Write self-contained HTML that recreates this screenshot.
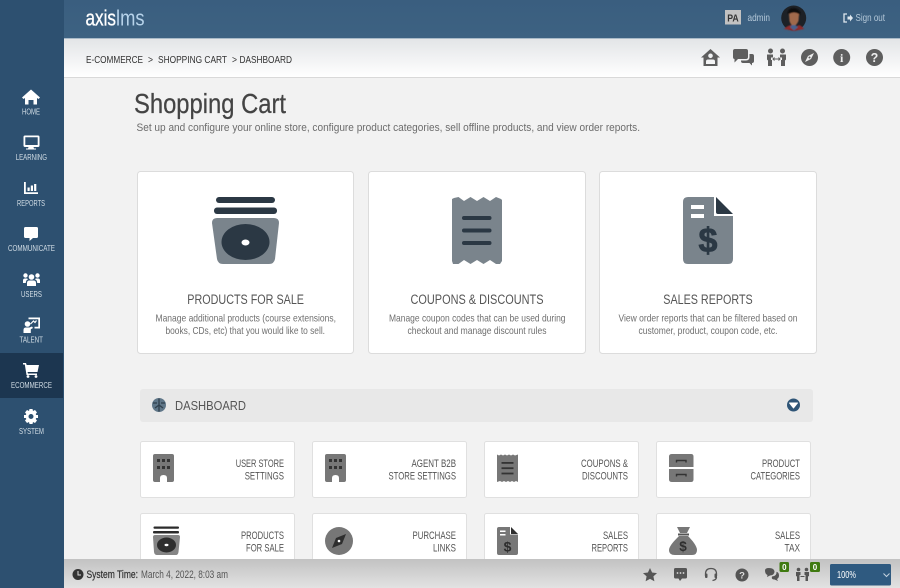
<!DOCTYPE html>
<html lang="en"><head><meta charset="utf-8"><title>Shopping Cart</title>
<style>
html,body{margin:0;padding:0;width:900px;height:588px;overflow:hidden;background:#f2f2f2}
svg{display:block}
text{font-family:"Liberation Sans",sans-serif}
</style></head><body>
<svg xmlns="http://www.w3.org/2000/svg" width="900" height="588" viewBox="0 0 900 588">
<defs>
<linearGradient id="sub" x1="0" y1="0" x2="0" y2="1"><stop offset="0" stop-color="#e3e5e7"/><stop offset="1" stop-color="#fff"/></linearGradient>
<linearGradient id="foot" x1="0" y1="0" x2="0" y2="1"><stop offset="0" stop-color="#c2c2c2"/><stop offset="1" stop-color="#e2e2e2"/></linearGradient>
<linearGradient id="head" x1="0" y1="0" x2="0" y2="1"><stop offset="0" stop-color="#3a5e7f"/><stop offset="1" stop-color="#3d6282"/></linearGradient>
<filter id="b" x="-10%" y="-10%" width="120%" height="120%"><feGaussianBlur stdDeviation="0.5"/></filter>
</defs>
<rect width="900" height="588" fill="#f2f2f2"/>

<!-- content: hero cards -->
<g fill="#fff" stroke="#dcdcdc">
<rect x="137.500" y="171.500" width="216" height="182" rx="3"/>
<rect x="368.500" y="171.500" width="217" height="182" rx="3"/>
<rect x="599.500" y="171.500" width="217" height="182" rx="3"/>
</g>
<!-- products icon -->
<rect x="216" y="197" width="59" height="6" rx="3" fill="#2b3844"/>
<rect x="214" y="207.500" width="63" height="6.500" rx="3" fill="#2b3844"/>
<path d="M217 218H274Q279 218 279 223L275 259Q274 264 269 264H223Q218 264 217 259L212 223Q212 218 217 218Z" fill="#7a848c"/>
<ellipse cx="245.500" cy="242" rx="24" ry="18" fill="#2b3844"/>
<ellipse cx="245.500" cy="242.500" rx="4" ry="3" fill="#fff"/>
<!-- receipt icon -->
<path d="M452 199L454 198L458.500 197L464 201L470.500 197L477 201L483.500 197L490 201L496 197L501 199L502 200V261L500 264L496 264L490 260L483.500 264L477 260L470.500 264L464 260L458.500 264L453 264L452 261Z" fill="#7a848c"/>
<g fill="#2b3844"><rect x="462" y="216" width="29.500" height="4" rx="2"/><rect x="462" y="228.500" width="29.500" height="4" rx="2"/><rect x="462" y="241" width="29.500" height="4" rx="2"/></g>
<!-- report icon -->
<path d="M688 197H714V216H733V259Q733 264 728 264H688Q683 264 683 259V202Q683 197 688 197Z" fill="#7a848c"/>
<path d="M716 197L733 214H718Q716 214 716 212Z" fill="#2b3844"/>
<rect x="691" y="205" width="13" height="4" fill="#fff"/><rect x="691" y="214" width="13" height="4" fill="#fff"/>
<text x="708" y="252" font-size="34" font-weight="700" fill="#2b3844" stroke="#2b3844" stroke-width=".8" text-anchor="middle">$</text>

<g fill="#555" font-size="13.500">
<text x="187.300" y="304" textLength="116.700" lengthAdjust="spacingAndGlyphs">PRODUCTS FOR SALE</text>
<text x="410.500" y="304" textLength="133" lengthAdjust="spacingAndGlyphs">COUPONS &amp; DISCOUNTS</text>
<text x="663.300" y="304" textLength="89.400" lengthAdjust="spacingAndGlyphs">SALES REPORTS</text>
</g>
<g fill="#6f6f6f" font-size="10.500">
<text x="155.500" y="321.500" textLength="180.500" lengthAdjust="spacingAndGlyphs">Manage additional products (course extensions,</text>
<text x="165.500" y="334" textLength="159.500" lengthAdjust="spacingAndGlyphs">books, CDs, etc) that you would like to sell.</text>
<text x="389" y="321.500" textLength="176.500" lengthAdjust="spacingAndGlyphs">Manage coupon codes that can be used during</text>
<text x="407.500" y="334" textLength="139" lengthAdjust="spacingAndGlyphs">checkout and manage discount rules</text>
<text x="618.500" y="321.500" textLength="179" lengthAdjust="spacingAndGlyphs">View order reports that can be filtered based on</text>
<text x="638.500" y="334" textLength="139" lengthAdjust="spacingAndGlyphs">customer, product, coupon code, etc.</text>
</g>

<!-- dashboard bar -->
<rect x="140" y="389" width="673" height="33" rx="3" fill="#e8e8e8"/>
<circle cx="159" cy="405" r="7" fill="#5f7688"/>
<path d="M159 398.500V411.500M153 403H157M161 403H165M155 408L159 405L163 408" stroke="#2f3f4c" stroke-width="1.300" fill="none"/>
<text x="175" y="410" font-size="13" fill="#555" textLength="71" lengthAdjust="spacingAndGlyphs">DASHBOARD</text>
<circle cx="793.500" cy="405" r="6.500" fill="#2f5577"/>
<path d="M789.500 403H797.500L793.500 408Z" fill="#fff" stroke="#fff" stroke-linejoin="round"/>

<!-- small cards -->
<g fill="#fff" stroke="#e0e0e0">
<rect x="140.500" y="441.500" width="154" height="56" rx="2"/>
<rect x="312.500" y="441.500" width="154" height="56" rx="2"/>
<rect x="484.500" y="441.500" width="154" height="56" rx="2"/>
<rect x="656.500" y="441.500" width="154" height="56" rx="2"/>
<rect x="140.500" y="513.500" width="154" height="60" rx="2"/>
<rect x="312.500" y="513.500" width="154" height="60" rx="2"/>
<rect x="484.500" y="513.500" width="154" height="60" rx="2"/>
<rect x="656.500" y="513.500" width="154" height="60" rx="2"/>
</g>
<g fill="#555" font-size="11.200">
<text x="235.700" y="467" textLength="48.300" lengthAdjust="spacingAndGlyphs">USER STORE</text>
<text x="244.700" y="479.500" textLength="39.300" lengthAdjust="spacingAndGlyphs">SETTINGS</text>
<text x="411.500" y="467" textLength="44.500" lengthAdjust="spacingAndGlyphs">AGENT B2B</text>
<text x="388.500" y="479.500" textLength="67.500" lengthAdjust="spacingAndGlyphs">STORE SETTINGS</text>
<text x="581" y="467" textLength="47" lengthAdjust="spacingAndGlyphs">COUPONS &amp;</text>
<text x="582" y="479.500" textLength="46" lengthAdjust="spacingAndGlyphs">DISCOUNTS</text>
<text x="762" y="467" textLength="38" lengthAdjust="spacingAndGlyphs">PRODUCT</text>
<text x="750.500" y="479.500" textLength="49.500" lengthAdjust="spacingAndGlyphs">CATEGORIES</text>
<text x="241" y="539" textLength="43" lengthAdjust="spacingAndGlyphs">PRODUCTS</text>
<text x="246" y="551.500" textLength="38" lengthAdjust="spacingAndGlyphs">FOR SALE</text>
<text x="412.500" y="539" textLength="43.500" lengthAdjust="spacingAndGlyphs">PURCHASE</text>
<text x="433" y="551.500" textLength="23" lengthAdjust="spacingAndGlyphs">LINKS</text>
<text x="603" y="539" textLength="25" lengthAdjust="spacingAndGlyphs">SALES</text>
<text x="591.500" y="551.500" textLength="36.500" lengthAdjust="spacingAndGlyphs">REPORTS</text>
<text x="775" y="539" textLength="25" lengthAdjust="spacingAndGlyphs">SALES</text>
<text x="784.500" y="551.500" textLength="15.500" lengthAdjust="spacingAndGlyphs">TAX</text>
</g>

<!-- small icons -->
<g>
<path d="M155 454H172Q174 454 174 456V480Q174 482 172 482H167V478Q167 475 163.500 475T160 478V482H155Q153 482 153 480V456Q153 454 155 454Z" fill="#777"/>
<g fill="#333"><rect x="157" y="459" width="3" height="3"/><rect x="162" y="459" width="3" height="3"/><rect x="167" y="459" width="3" height="3"/><rect x="157" y="466" width="3" height="3"/><rect x="162" y="466" width="3" height="3"/><rect x="167" y="466" width="3" height="3"/></g>
</g>
<g transform="translate(172 0)">
<path d="M155 454H172Q174 454 174 456V480Q174 482 172 482H167V478Q167 475 163.500 475T160 478V482H155Q153 482 153 480V456Q153 454 155 454Z" fill="#777"/>
<g fill="#333"><rect x="157" y="459" width="3" height="3"/><rect x="162" y="459" width="3" height="3"/><rect x="167" y="459" width="3" height="3"/><rect x="157" y="466" width="3" height="3"/><rect x="162" y="466" width="3" height="3"/><rect x="167" y="466" width="3" height="3"/></g>
</g>
<!-- small receipt -->
<path d="M497 454.500L499 455.500L501 454.500L503 455.500L505 454.500L507 455.500L509 454.500L511 455.500L513 454.500L515 455.500L518 454.500V482L516 481L514 482L512 481L510 482L508 481L506 482L504 481L502 482L500 481L497 482Z" fill="#777"/>
<g fill="#333"><rect x="501.500" y="462" width="12" height="1.800"/><rect x="501.500" y="467.300" width="12" height="1.800"/><rect x="501.500" y="472.600" width="12" height="1.800"/></g>
<!-- drawers -->
<path d="M672 454H691Q693.500 454 693.500 456.500V467H669V456.500Q669 454 672 454ZM669 469H693.500V479.500Q693.500 482 691 482H672Q669 482 669 479.500Z" fill="#777"/>
<path d="M676.500 462.500V460.500H686V462.500M676.500 476.500V474.500H686V476.500" stroke="#333" stroke-width="1.400" fill="none"/>
<!-- small product -->
<rect x="153.500" y="526.500" width="25.500" height="2.200" rx="1" fill="#2b2b2b"/>
<rect x="153" y="531" width="26" height="2.500" rx="1" fill="#2b2b2b"/>
<path d="M155 535H178Q180 535 180 537L178.500 552Q178 555 176 555H157Q154.500 555 154 552L153 537Q153 535 155 535Z" fill="#858585"/>
<ellipse cx="166.500" cy="545" rx="9.500" ry="7.500" fill="#2e2e2e"/><ellipse cx="166.500" cy="545" rx="2" ry="1.200" fill="#fff"/>
<!-- compass -->
<circle cx="339" cy="541" r="14" fill="#777"/>
<path d="M346 534L342 544L332 548L336 538Z" fill="#2e2e2e"/><circle cx="339" cy="541" r="1.300" fill="#fff"/>
<!-- small doc -->
<path d="M499 527H510V534.500H518V553Q518 555 516 555H499Q497 555 497 553V529Q497 527 499 527Z" fill="#777"/>
<path d="M511 527L518 534H511Z" fill="#2e2e2e"/>
<rect x="500" y="530.500" width="5.500" height="1.500" fill="#fff"/><rect x="500" y="534" width="5.500" height="1.500" fill="#fff"/>
<text x="507.500" y="551.500" font-size="14" font-weight="700" fill="#2e2e2e" text-anchor="middle">$</text>
<!-- money bag -->
<path d="M677 527H690L687 533H680Z" fill="#777"/><rect x="678" y="533.500" width="11" height="2" fill="#555"/>
<path d="M679 536H688C692 540 697 546 697 550Q697 555 692 555H675Q669 555 669 550C669 546 675 540 679 536Z" fill="#777"/>
<text x="683" y="551" font-size="13.500" font-weight="700" fill="#2e2e2e" text-anchor="middle">$</text>

<!-- title -->
<text x="134" y="113" font-size="28" fill="#444" stroke="#444" stroke-width=".25" textLength="152" lengthAdjust="spacingAndGlyphs">Shopping Cart</text>
<text x="136.500" y="131" font-size="11.200" fill="#6c6c6c" textLength="503.500" lengthAdjust="spacingAndGlyphs">Set up and configure your online store, configure product categories, sell offline products, and view order reports.</text>

<!-- top header -->
<rect x="64" y="0" width="836" height="38" fill="url(#head)"/>
<rect x="64" y="38" width="836" height="1" fill="#a9bac8"/>
<text x="85.500" y="25.500" font-size="22" fill="#fff" stroke="#fff" stroke-width=".3" textLength="30.500" lengthAdjust="spacingAndGlyphs">axis</text>
<text x="116" y="25.500" font-size="22" fill="#b7d3ea" textLength="28.500" lengthAdjust="spacingAndGlyphs">lms</text>
<rect x="725" y="10" width="16" height="14.500" fill="#c2c2c2"/>
<text x="733" y="21.300" font-size="10" font-weight="700" fill="#333" text-anchor="middle" textLength="11.500" lengthAdjust="spacingAndGlyphs">PA</text>
<text x="747.500" y="21" font-size="10.500" fill="#b4c8d8" textLength="22.500" lengthAdjust="spacingAndGlyphs">admin</text>
<circle cx="793.700" cy="18" r="12.500" fill="#1d2126"/>
<g filter="url(#b)">
<path d="M787.500 14Q788 8 794 8Q800 9 800.500 14L799 16L790 13Z" fill="#0c0c0e"/>
<path d="M789 14Q794 11 799 14L798.500 21Q796 26 794 26Q791 26 789.500 21Z" fill="#a0694c"/>
<path d="M784 29Q788 25 792 25L795 27L799 25Q802 26 804 29L794 31Z" fill="#8d2c2c"/>
<path d="M790 27L794 30.500L798 27L795 25H792Z" fill="#44628f"/>
</g>
<path d="M847 14H844V22H847" stroke="#dfe8ef" stroke-width="1.300" fill="none"/>
<path d="M847.500 16.500H850V14.500L853 18L850 21.500V19.500H847.500Z" fill="#dfe8ef"/>
<text x="855.500" y="21" font-size="10.500" fill="#b4c8d8" textLength="29.500" lengthAdjust="spacingAndGlyphs">Sign out</text>

<!-- subheader -->
<rect x="64" y="39" width="836" height="38" fill="url(#sub)"/>
<rect x="64" y="77" width="836" height="1" fill="#d9d9d9"/>
<g fill="#333" font-size="10.200">
<text x="86" y="63" textLength="57" lengthAdjust="spacingAndGlyphs">E-COMMERCE</text>
<text x="148" y="63" textLength="5" lengthAdjust="spacingAndGlyphs">&gt;</text>
<text x="158" y="63" textLength="69" lengthAdjust="spacingAndGlyphs">SHOPPING CART</text>
<text x="232" y="63" textLength="5" lengthAdjust="spacingAndGlyphs">&gt;</text>
<text x="239.500" y="63" textLength="52.500" lengthAdjust="spacingAndGlyphs">DASHBOARD</text>
</g>
<!-- toolbar icons -->
<g fill="#5e5e5e">
<path fill-rule="evenodd" d="M710.500 49L720 57.500H717.500V66H703.500V57.500H701ZM710.500 53.500A2.300 2.300 0 1 0 710.500 58.100A2.300 2.300 0 1 0 710.500 53.500ZM706 64H715V61.500Q715 59.500 713 59.500H708Q706 59.500 706 61.500Z"/>
<path d="M735 49H746Q748 49 748 51V57Q748 59 746 59H738L734.500 62.500V59Q733 59 733 57V51Q733 49 735 49Z"/>
<path d="M749.500 54H752Q754 54 754 56V61Q754 63 752 63V65.500L749.500 63H743Q741 63 741 61V60.500H746Q749.500 60.500 749.500 57Z"/>
<circle cx="770.500" cy="51" r="2.500"/><circle cx="782.500" cy="51" r="2.500"/>
<path d="M767 54.500H773V57.500H771V60H772V66H768V60.500L767 59.500Z"/>
<path d="M786 54.500H780V57.500H782V60H781V66H785V60.500L786 59.500Z"/>
<path d="M773 59H780M774.500 57.500L773 59L774.500 60.500M778.500 57.500L780 59L778.500 60.500" stroke="#5e5e5e" stroke-width="1" fill="none"/>
<circle cx="809.500" cy="57.500" r="8.500"/>
<circle cx="841.700" cy="57.500" r="8.500"/>
<circle cx="874.500" cy="57.500" r="8.500"/>
</g>
<path d="M814 53L811 59L805 62L808 56Z" fill="#eee"/><circle cx="809.500" cy="57.500" r="1" fill="#5e5e5e"/>
<text x="841.700" y="62" font-size="12" font-weight="700" fill="#eee" text-anchor="middle" style="font-family:'Liberation Serif',serif">i</text>
<text x="874.500" y="62" font-size="12.500" font-weight="700" fill="#eee" text-anchor="middle">?</text>

<!-- footer -->
<rect x="64" y="559" width="836" height="29" fill="url(#foot)"/>
<circle cx="78" cy="574.500" r="5.500" fill="#333"/>
<path d="M78 571V575H81" stroke="#ddd" stroke-width="1" fill="none"/>
<text x="86.500" y="578" font-size="11" fill="#333" stroke="#333" stroke-width=".2" textLength="51.500" lengthAdjust="spacingAndGlyphs">System Time:</text>
<text x="141" y="578" font-size="11" fill="#555" textLength="87" lengthAdjust="spacingAndGlyphs">March 4, 2022, 8:03 am</text>
<g fill="#555">
<path d="M650 568L652.100 572.500L657 573.100L653.400 576.400L654.400 581.300L650 578.900L645.600 581.300L646.600 576.400L643 573.100L647.900 572.500Z"/>
<path d="M675.500 568H685.500Q687 568 687 569.500V577Q687 578.500 685.500 578.500H682L680 581L678.500 578.500H675.500Q674 578.500 674 577V569.500Q674 568 675.500 568Z"/>
<circle cx="742" cy="575" r="6.500"/>
<path d="M765 570.500Q765 568 769 568Q774 568 774.500 571.500Q774.500 575 770 575.500L767 577L767.500 575Q765 574 765 570.500Z"/>
<path d="M772 576.500Q777 576 776.500 571.800Q779 572.500 779 575.500Q779 578 777 579L778 581L774.500 579.500Q771 579.500 772 576.500Z"/>
<circle cx="798.500" cy="569.500" r="1.800"/><circle cx="806.500" cy="569.500" r="1.800"/>
<path d="M796 572H800.500V575H799.500V581H797V576.500L796 576Z"/><path d="M809 572H804.500V575H805.500V581H808V576.500L809 576Z"/>
</g>
<path d="M800.500 576.500H804.500" stroke="#555" stroke-width="1"/>
<path d="M705.500 576V574Q705.500 568.500 711 568.500T716.500 574V576M716.500 577Q716.500 580 712.500 580.500" stroke="#555" stroke-width="1.300" fill="none"/>
<rect x="705" y="573.500" width="2.500" height="4.500" rx="1" fill="#555"/><rect x="714.500" y="573.500" width="2.500" height="4.500" rx="1" fill="#555"/>
<g fill="#ddd"><circle cx="677.500" cy="573" r=".9"/><circle cx="680.500" cy="573" r=".9"/><circle cx="683.500" cy="573" r=".9"/></g>
<text x="742" y="578.500" font-size="9.500" font-weight="700" fill="#ddd" text-anchor="middle">?</text>
<rect x="779.500" y="562" width="9.500" height="10" rx="1.500" fill="#3f7a10"/>
<rect x="810" y="562" width="10" height="10" rx="1.500" fill="#3f7a10"/>
<text x="784.300" y="570" font-size="8" font-weight="700" fill="#fff" text-anchor="middle">0</text>
<text x="815" y="570" font-size="8" font-weight="700" fill="#fff" text-anchor="middle">0</text>
<rect x="830" y="564" width="61" height="21.500" rx="1.500" fill="#2f5a80"/>
<text x="837" y="578" font-size="10" fill="#fff" textLength="19" lengthAdjust="spacingAndGlyphs">100%</text>
<path d="M883.500 573.500L886.500 576.500L889.500 573.500" stroke="#c4d3df" stroke-width="1" fill="none"/>

<!-- sidebar -->
<rect x="0" y="0" width="64" height="588" fill="#2d5070"/>
<rect x="0" y="353" width="63" height="45" fill="#1c3650"/>
<g fill="#fff">
<path d="M31 89.500L40 97.500L38.500 99L37 98V104.500H33.500V100H28.500V104.500H25V98L23.500 99L22 97.500Z"/>
<path fill-rule="evenodd" d="M25 135.500H38Q39.500 135.500 39.500 137V145.500Q39.500 147 38 147H33.500L34 148.500H36V149.500H26V148.500H28L28.500 147H25Q23.500 147 23.500 145.500V137Q23.500 135.500 25 135.500ZM25.300 137.300V145H37.700V137.300Z"/>
<path fill-rule="evenodd" d="M24 182H25.800V192.300H38V194H24ZM27.500 187.500H29.700V191H27.500ZM30.800 185.500H33V191H30.800ZM34.100 184H36.300V191H34.100Z"/>
<path d="M25.500 227H36.500Q38 227 38 228.500V236.500Q38 238 36.500 238H33L29.500 241V238H25.500Q24 238 24 236.500V228.500Q24 227 25.500 227Z"/>
<circle cx="31.500" cy="277" r="2.800"/><circle cx="25.500" cy="275.500" r="2.200"/><circle cx="37.500" cy="275.500" r="2.200"/>
<path d="M27 286V283Q27 280.500 29.500 280.500H33.500Q36 280.500 36 283V286Z"/>
<path d="M23 283V280.500Q23 278.500 25 278.500H27Q27.800 278.800 28 279.400Q25.800 280 25.800 283Z"/>
<path d="M40 283V280.500Q40 278.500 38 278.500H36Q35.200 278.800 35 279.400Q37.200 280 37.200 283Z"/>
<path fill-rule="evenodd" d="M28.500 317.500H40V328.500H34.500V326.800H38.300V319.200H28.500Z"/>
<path d="M30.500 324L33.500 321L35 322.500L36.500 320.500" stroke="#fff" stroke-width="1.200" fill="none"/>
<circle cx="27.500" cy="324" r="2.800"/>
<path d="M23.500 333V330Q23.500 327.500 26 327.500H29.500L32 326.500L33 328L30.800 329.200V333Z"/>
<path d="M23 363H26L26.700 365H39L37.500 372H27.500L28 373.500H37V375H26.500L24.800 364.500H23Z"/>
<circle cx="28" cy="376.500" r="1.400"/><circle cx="36" cy="376.500" r="1.400"/>
<path fill-rule="evenodd" d="M29.500 409H32.500L33 411L35 410L37 412.500L35.700 414L36.200 415H38V418H36.200L35.700 419L37 420.500L35 423L33 422L32.500 424H29.500L29 422L27 423L25 420.500L26.300 419L25.800 418H24V415H25.800L26.300 414L25 412.500L27 410L29 411ZM31 414A2.500 2.500 0 1 0 31 419A2.500 2.500 0 1 0 31 414Z"/>
</g>
<g fill="#d3deE6" font-size="8.600">
<text x="22" y="114.500" textLength="18" lengthAdjust="spacingAndGlyphs">HOME</text>
<text x="15.700" y="160" textLength="31.300" lengthAdjust="spacingAndGlyphs">LEARNING</text>
<text x="17" y="206" textLength="28" lengthAdjust="spacingAndGlyphs">REPORTS</text>
<text x="8" y="251.200" textLength="47" lengthAdjust="spacingAndGlyphs">COMMUNICATE</text>
<text x="21" y="297" textLength="21" lengthAdjust="spacingAndGlyphs">USERS</text>
<text x="19.500" y="342.700" textLength="23.500" lengthAdjust="spacingAndGlyphs">TALENT</text>
<text x="11" y="388.200" textLength="41" lengthAdjust="spacingAndGlyphs">ECOMMERCE</text>
<text x="19" y="434" textLength="25" lengthAdjust="spacingAndGlyphs">SYSTEM</text>
</g>
</svg>
</body></html>
